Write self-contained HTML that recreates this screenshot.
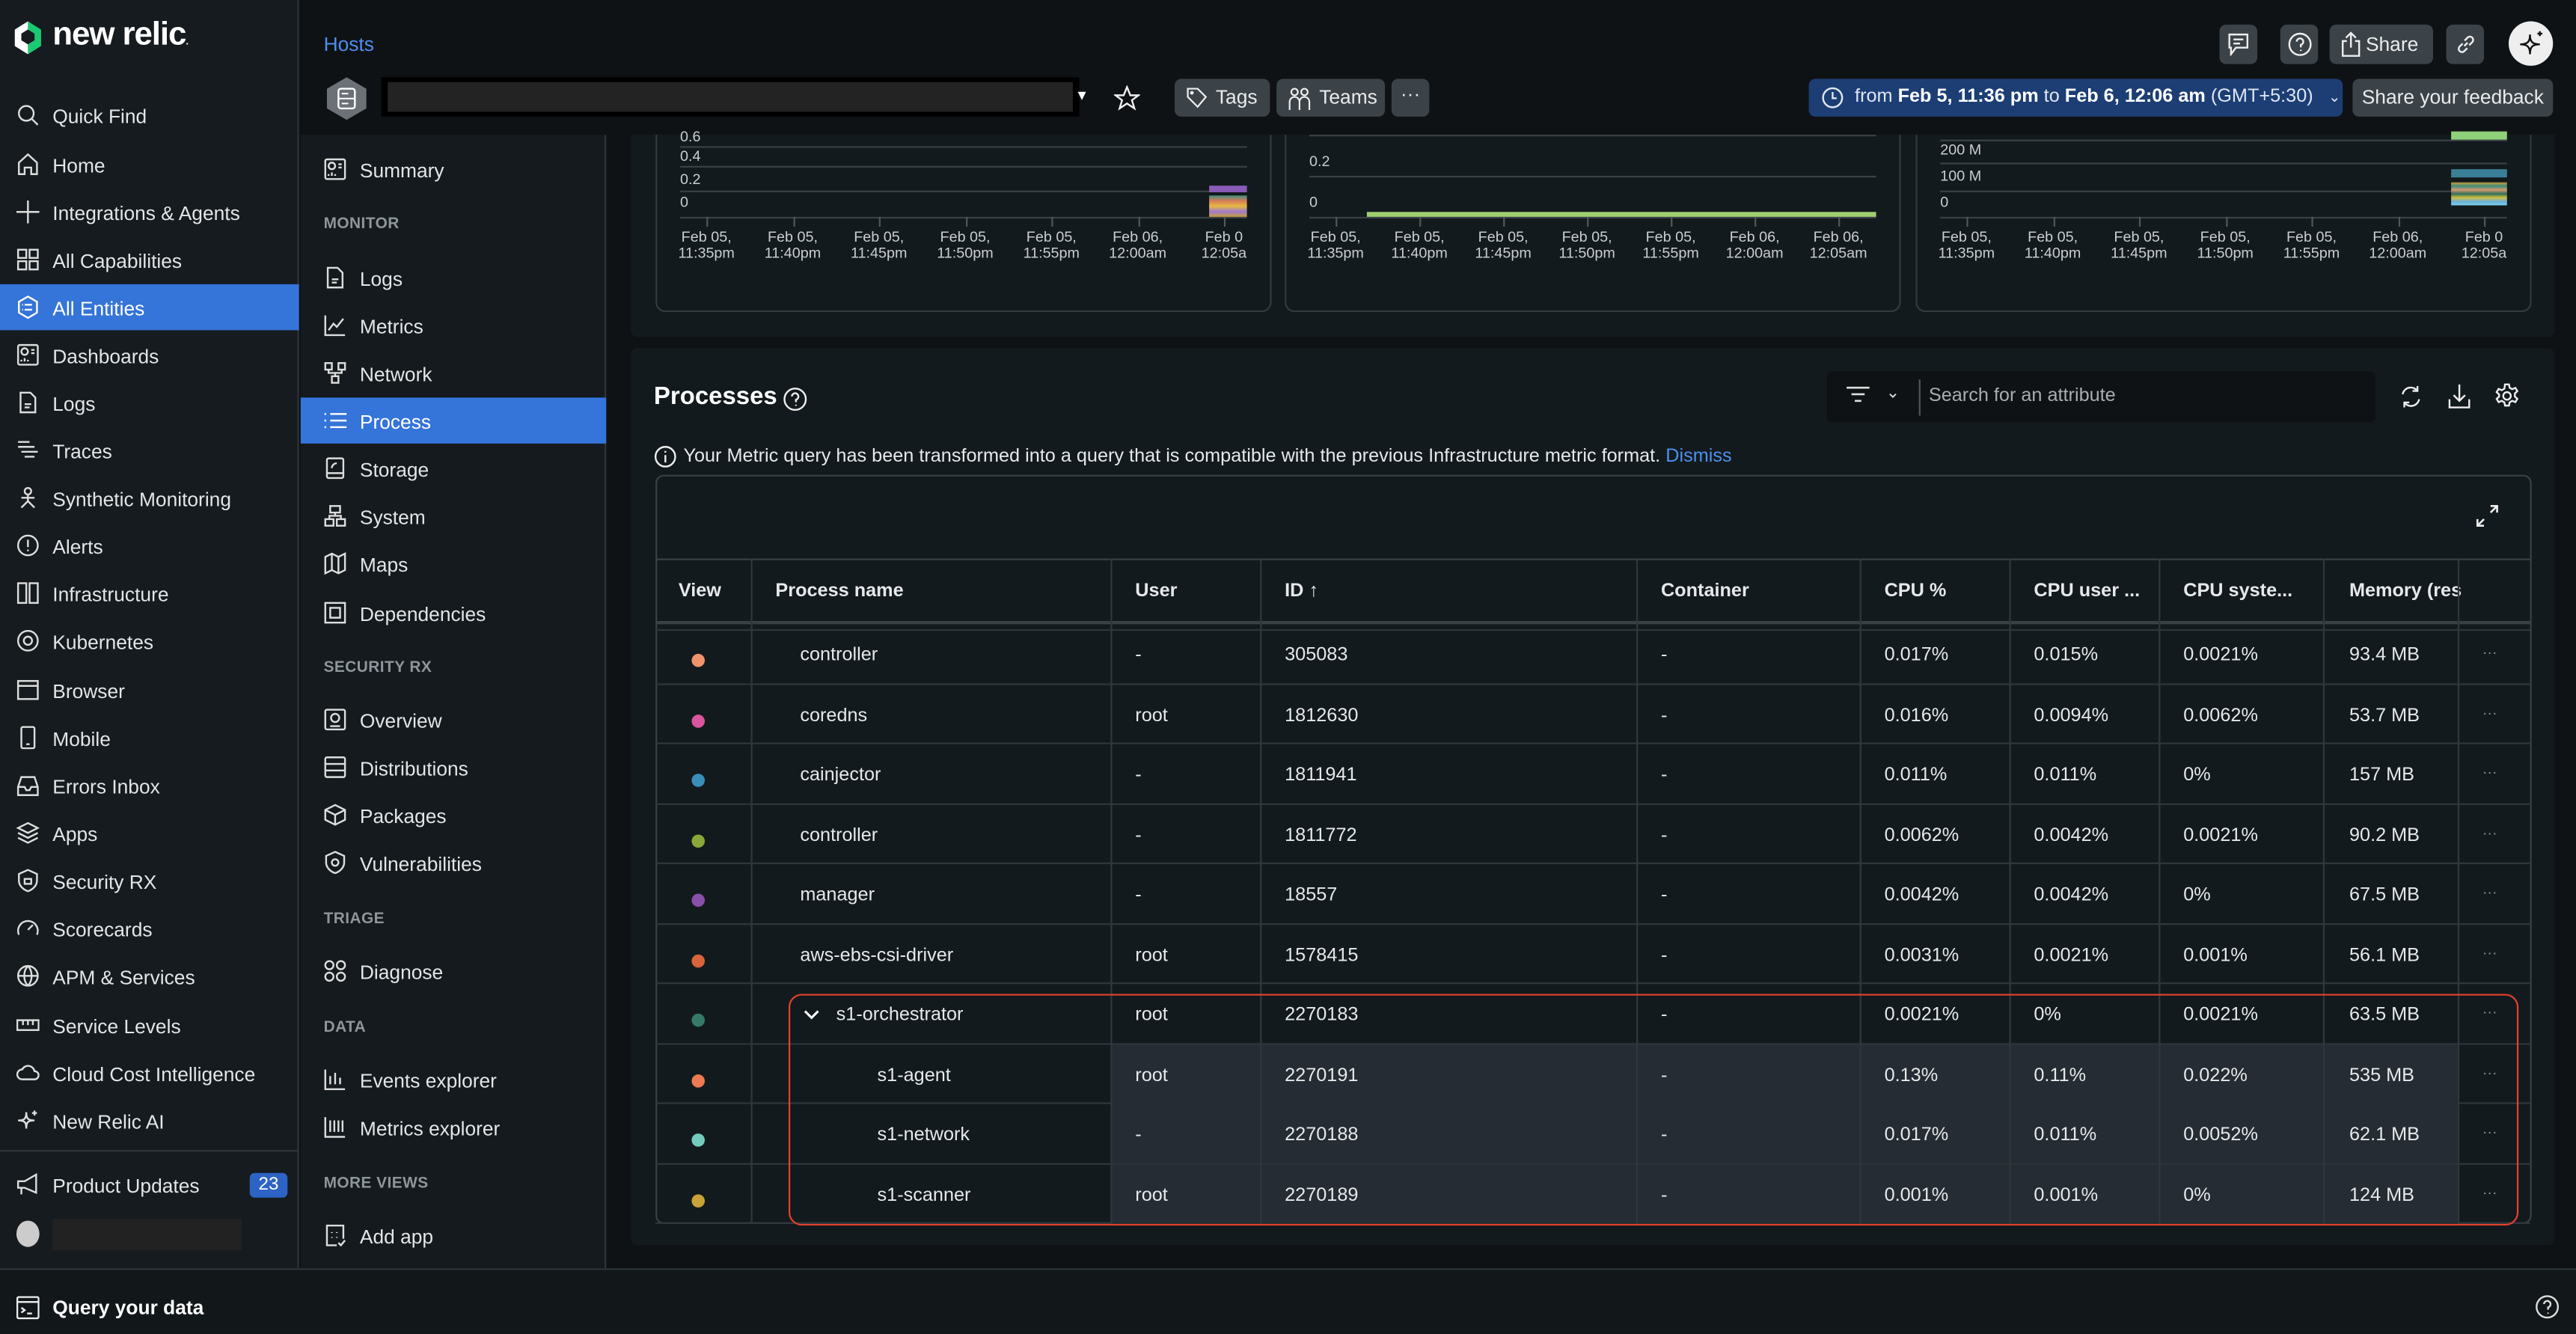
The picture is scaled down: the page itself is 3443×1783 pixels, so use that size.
<!DOCTYPE html>
<html><head><meta charset="utf-8"><style>
*{box-sizing:border-box;margin:0;padding:0}
html,body{width:3443px;height:1782px;overflow:hidden;background:#0f1214}
#s{position:absolute;left:0;top:0;width:1568px;height:812px;transform:scale(2.19579);transform-origin:0 0;font-family:"Liberation Sans",sans-serif;color:#e6e8ea;font-size:12px}
.a{position:absolute}
.nav{left:0;top:0;width:182px;height:772px;background:#151b1e;border-right:1px solid #2e353a}
.ni{position:absolute;left:0;width:182px;height:28px;line-height:30px;padding-left:32px;font-size:12px;color:#e3e5e7}
.ni svg{position:absolute;left:10px;top:7px}
.sn{left:183px;top:82px;width:186px;height:690px;background:#141a1d;border-right:1px solid #2e353a}
.si{position:absolute;left:0;width:186px;height:28px;line-height:30px;padding-left:36px;font-size:12px;color:#e3e5e7}
.si svg{position:absolute;left:14px;top:7px}
.sh{position:absolute;left:14px;font-size:9.5px;color:#8e959b;font-weight:bold;letter-spacing:.2px}
.btn{position:absolute;background:#3c4348;border-radius:4px;color:#e9ebec;font-size:12px}
.panel{background:#131a1d;border-radius:4px}
.chart{position:absolute;top:82px;height:108px;border:1px solid #343b40;border-top:none;border-radius:0 0 6px 6px}
.gl{position:absolute;height:1px;background:#3a4146}
.yl{position:absolute;font-size:9px;color:#c9cdd0}
.xl{position:absolute;font-size:9px;color:#c9cdd0;text-align:center;line-height:10px;width:40px}
.row{position:absolute;left:399px;width:1141px;height:36.5px;border-bottom:1px solid #30373c}
.c{position:absolute;top:1px;height:36px;line-height:36px;font-size:11.5px;color:#e6e8ea;white-space:nowrap}
.vl{position:absolute;width:1px;background:#30373c}
.dot{position:absolute;width:8px;height:8px;border-radius:50%;left:22px;top:18px}
.hl{position:absolute;left:277px;width:820px;top:0;height:36px;background:#252c33}
</style></head><body><div id="s">

<div class="a nav">
 <svg class="a" style="left:7px;top:12px" width="20" height="22" viewBox="0 0 20 22"><path d="M10 1 L18 6 V16 L10 21 V15 L14 12.5 V8.5 L10 6 Z" fill="#1ce783" opacity=".85"/><path d="M10 1 L2 6 V16 L10 21 V15 L6 12.5 V8.5 L10 6 Z" fill="#ffffff"/><path d="M10 6 L14 8.5 V12.5 L10 15 L6 12.5 V8.5Z" fill="#151b1e"/></svg>
 <div class="a" style="left:32px;top:10px;font-size:20px;font-weight:bold;color:#fff;letter-spacing:-.5px">new relic<span style="font-size:6px">.</span></div>
 <div class="ni" style="top:56px"><svg width="14" height="14" viewBox="0 0 14 14" fill="none" stroke="#ddd" stroke-width="1.1"><circle cx="6" cy="6" r="4.5"/><path d="M9.5 9.5L13 13"/></svg>Quick Find</div>
 <div class="ni" style="top:86px"><svg width="14" height="14" viewBox="0 0 14 14" fill="none" stroke="#ddd" stroke-width="1.1"><path d="M1.5 13V6L7 1l5.5 5v7h-3.5V9h-4v4z"/></svg>Home</div>
 <div class="ni" style="top:115px"><svg width="14" height="14" viewBox="0 0 14 14" fill="none" stroke="#ddd" stroke-width="1.1"><path d="M7 0v14M0 7h14"/></svg>Integrations &amp; Agents</div>
 <div class="ni" style="top:144px"><svg width="14" height="14" viewBox="0 0 14 14" fill="none" stroke="#ddd" stroke-width="1.1"><rect x="1" y="1" width="5" height="5"/><rect x="8" y="1" width="5" height="5"/><rect x="1" y="8" width="5" height="5"/><rect x="8" y="8" width="5" height="5"/></svg>All Capabilities</div>
 <div class="ni" style="top:173px;background:#3574d9;color:#fff"><svg width="14" height="14" viewBox="0 0 14 14" fill="none" stroke="#fff" stroke-width="1.1"><path d="M7 0.5l5.5 3.2v6.6L7 13.5l-5.5-3.2V3.7z"/><path d="M5 5.5h4.5M5 8.5h4.5M3.5 5.5h.5M3.5 8.5h.5"/></svg>All Entities</div>
 <div class="ni" style="top:202px"><svg width="14" height="14" viewBox="0 0 14 14" fill="none" stroke="#ddd" stroke-width="1.1"><rect x="1" y="1" width="12" height="12" rx="1"/><circle cx="5" cy="5" r="2"/><path d="M9 4h2M9 6h2M3 11v-1M5 11v-2M7 11v-1"/></svg>Dashboards</div>
 <div class="ni" style="top:231px"><svg width="14" height="14" viewBox="0 0 14 14" fill="none" stroke="#ddd" stroke-width="1.1"><path d="M2.5 1h6l3 3v9h-9z M5 8h4M5 10h3"/></svg>Logs</div>
 <div class="ni" style="top:260px"><svg width="14" height="14" viewBox="0 0 14 14" fill="none" stroke="#ddd" stroke-width="1.1"><path d="M1 2h7M1 5h10M3 8h10M5 11h6"/></svg>Traces</div>
 <div class="ni" style="top:289px"><svg width="14" height="14" viewBox="0 0 14 14" fill="none" stroke="#ddd" stroke-width="1.1"><circle cx="7" cy="3" r="2"/><path d="M7 5v4M3 13l4-4 4 4M3 7h8"/></svg>Synthetic Monitoring</div>
 <div class="ni" style="top:318px"><svg width="14" height="14" viewBox="0 0 14 14" fill="none" stroke="#ddd" stroke-width="1.1"><circle cx="7" cy="7" r="6"/><path d="M7 3.5v4.5M7 9.5v1"/></svg>Alerts</div>
 <div class="ni" style="top:347px"><svg width="14" height="14" viewBox="0 0 14 14" fill="none" stroke="#ddd" stroke-width="1.1"><rect x="1" y="1" width="5" height="12"/><rect x="8" y="1" width="5" height="12"/></svg>Infrastructure</div>
 <div class="ni" style="top:376px"><svg width="14" height="14" viewBox="0 0 14 14" fill="none" stroke="#ddd" stroke-width="1.1"><circle cx="7" cy="7" r="6"/><circle cx="7" cy="7" r="2.5"/></svg>Kubernetes</div>
 <div class="ni" style="top:406px"><svg width="14" height="14" viewBox="0 0 14 14" fill="none" stroke="#ddd" stroke-width="1.1"><rect x="1" y="1.5" width="12" height="11"/><path d="M1 4.5h12"/></svg>Browser</div>
 <div class="ni" style="top:435px"><svg width="14" height="14" viewBox="0 0 14 14" fill="none" stroke="#ddd" stroke-width="1.1"><rect x="3" y="0.5" width="8" height="13" rx="1"/><path d="M6 11h2"/></svg>Mobile</div>
 <div class="ni" style="top:464px"><svg width="14" height="14" viewBox="0 0 14 14" fill="none" stroke="#ddd" stroke-width="1.1"><path d="M1 8l2-6h8l2 6v5H1z M1 8h4l1 2h2l1-2h4"/></svg>Errors Inbox</div>
 <div class="ni" style="top:493px"><svg width="14" height="14" viewBox="0 0 14 14" fill="none" stroke="#ddd" stroke-width="1.1"><path d="M7 1l6 3-6 3-6-3z M1 7l6 3 6-3M1 10l6 3 6-3"/></svg>Apps</div>
 <div class="ni" style="top:522px"><svg width="14" height="14" viewBox="0 0 14 14" fill="none" stroke="#ddd" stroke-width="1.1"><path d="M7 .5l5.5 2.5v4c0 3-2.5 5.5-5.5 6.5C4 12.5 1.5 10 1.5 7V3z"/><rect x="5" y="6" width="4" height="3"/></svg>Security RX</div>
 <div class="ni" style="top:551px"><svg width="14" height="14" viewBox="0 0 14 14" fill="none" stroke="#ddd" stroke-width="1.1"><path d="M1.5 11a6 6 0 1 1 11 0"/><path d="M7 8l3-3"/></svg>Scorecards</div>
 <div class="ni" style="top:580px"><svg width="14" height="14" viewBox="0 0 14 14" fill="none" stroke="#ddd" stroke-width="1.1"><circle cx="7" cy="7" r="6"/><path d="M1 7h12M7 1c3 3 3 9 0 12M7 1c-3 3-3 9 0 12"/></svg>APM &amp; Services</div>
 <div class="ni" style="top:610px"><svg width="14" height="14" viewBox="0 0 14 14" fill="none" stroke="#ddd" stroke-width="1.1"><rect x="0.5" y="4" width="13" height="6"/><path d="M4 4v3M7 4v3M10 4v3"/></svg>Service Levels</div>
 <div class="ni" style="top:639px"><svg width="14" height="14" viewBox="0 0 14 14" fill="none" stroke="#ddd" stroke-width="1.1"><path d="M3.5 11a3 3 0 0 1 0-6 4 4 0 0 1 7.5 1 2.5 2.5 0 0 1 0 5z"/></svg>Cloud Cost Intelligence</div>
 <div class="ni" style="top:668px"><svg width="14" height="14" viewBox="0 0 14 14" fill="none" stroke="#ddd" stroke-width="1.1"><path d="M6 2c0 4 1 5 5 5-4 0-5 1-5 5 0-4-1-5-5-5 4 0 5-1 5-5z M11 1v3M9.5 2.5h3"/></svg>New Relic AI</div>
 <div class="a" style="left:0;top:700px;width:182px;height:1px;background:#2e353a"></div>
 <div class="ni" style="top:707px"><svg width="14" height="14" viewBox="0 0 14 14" fill="none" stroke="#ddd" stroke-width="1.1"><path d="M1 5h4l7-4v11L5 9H1z M3 9v4"/></svg>Product Updates</div>
 <div class="a" style="left:152px;top:714px;width:23px;height:15px;border-radius:3px;background:#2d63c4;color:#fff;font-size:11px;text-align:center;line-height:15px">23</div>
 <div class="a" style="left:10px;top:743px;width:14px;height:16px;border-radius:50%;background:#ccc"></div>
 <div class="a" style="left:32px;top:742px;width:115px;height:19px;background:#222"></div>
</div>

<div class="a" style="left:0;top:772px;width:1568px;height:40px;background:#121719;border-top:1px solid #2e353a"></div>
<svg class="a" style="left:10px;top:789px" width="14" height="14" viewBox="0 0 14 14" fill="none" stroke="#eee" stroke-width="1.1"><rect x="0.5" y="0.5" width="13" height="13" rx="1"/><path d="M0.5 3.5h13M3 7l2 1.5L3 10M6.5 10.5h3"/></svg>
<div class="a" style="left:32px;top:789px;font-size:12px;font-weight:bold;color:#fff">Query your data</div>
<svg class="a" style="left:1543px;top:788px" width="15" height="15" viewBox="0 0 15 15" fill="none" stroke="#ddd" stroke-width="1.1"><circle cx="7.5" cy="7.5" r="6.5"/><path d="M5.5 5.8a2 2 0 1 1 2.5 2v1.4M8 11v.6"/></svg>

<div class="a" style="left:183px;top:0;width:1385px;height:82px;background:#0f1214"></div>
<div class="a" style="left:197px;top:20px;color:#4d8ff0;font-size:12px">Hosts</div>
<svg class="a" style="left:197px;top:46px" width="28" height="28" viewBox="0 0 28 28"><path d="M14 1L26 8V20L14 27L2 20V8Z" fill="#6b7177"/><rect x="9" y="8" width="10" height="12" rx="1.5" fill="none" stroke="#fff" stroke-width="1.1"/><path d="M9 14h10M11 11h4M11 17h4" stroke="#fff" stroke-width=".9"/></svg>
<div class="a" style="left:232px;top:47px;width:425px;height:24px;background:#000"></div>
<div class="a" style="left:236px;top:50px;width:417px;height:18px;background:#232323"></div>
<div class="a" style="left:656px;top:53px;font-size:10px;color:#fff">&#9662;</div>
<svg class="a" style="left:678px;top:52px" width="16" height="16" viewBox="0 0 16 16" fill="none" stroke="#eee" stroke-width="1.1"><path d="M8 1l2 5h5l-4 3 1.5 5L8 11l-4.5 3L5 9 1 6h5z"/></svg>
<div class="btn" style="left:715px;top:48px;width:58px;height:23px;line-height:23px;padding-left:25px">Tags<svg class="a" style="left:7px;top:5px" width="13" height="13" viewBox="0 0 13 13" fill="none" stroke="#eee" stroke-width="1"><path d="M1 1h6l5 5-5 6-6-6z"/><circle cx="3.5" cy="3.5" r=".6"/></svg></div>
<div class="btn" style="left:777px;top:48px;width:66px;height:23px;line-height:23px;padding-left:26px">Teams<svg class="a" style="left:7px;top:5px" width="14" height="14" viewBox="0 0 14 14" fill="none" stroke="#eee" stroke-width="1"><circle cx="4" cy="3" r="2"/><circle cx="10" cy="3" r="2"/><path d="M1 14V9a3 3 0 0 1 6 0v5M7 9a3 3 0 0 1 6 0v5"/></svg></div>
<div class="btn" style="left:847px;top:48px;width:23px;height:23px;line-height:19px;text-align:center">···</div>
<div class="btn" style="left:1351px;top:15px;width:23px;height:24px"><svg class="a" style="left:5px;top:5px" width="13" height="14" viewBox="0 0 13 14" fill="none" stroke="#eee" stroke-width="1.1"><path d="M1 1h11v8H5l-3 4V9H1z M3.5 4h6M3.5 6.5h4"/></svg></div>
<div class="btn" style="left:1388px;top:15px;width:23px;height:24px"><svg class="a" style="left:4px;top:4px" width="16" height="16" viewBox="0 0 16 16" fill="none" stroke="#eee" stroke-width="1.1"><circle cx="8" cy="8" r="6.5"/><path d="M6 6.3a2 2 0 1 1 2.5 2v1.5M8.5 11.3v.7"/></svg></div>
<div class="btn" style="left:1418px;top:15px;width:63px;height:24px;line-height:24px;padding-left:22px;font-size:12px">Share<svg class="a" style="left:7px;top:4px" width="12" height="16" viewBox="0 0 12 16" fill="none" stroke="#eee" stroke-width="1.1"><path d="M6 10V1M3 4l3-3 3 3M3.5 6H1v9h10V6H8.5"/></svg></div>
<div class="btn" style="left:1489px;top:15px;width:23px;height:24px"><svg class="a" style="left:5px;top:5px" width="14" height="14" viewBox="0 0 14 14" fill="none" stroke="#eee" stroke-width="1.1"><path d="M6 8l2-2M5 6.5L3 8.5a2 2 0 0 0 2.8 2.8l2-2M9 7.5l2-2A2 2 0 0 0 8.2 2.7l-2 2"/></svg></div>
<div class="a" style="left:1527px;top:13px;width:27px;height:27px;border-radius:50%;background:#eee"><svg class="a" style="left:6px;top:5px" width="16" height="17" viewBox="0 0 16 17" fill="none" stroke="#111" stroke-width="1.1"><path d="M7 3c0 4.5 1.5 6 6 6-4.5 0-6 1.5-6 6 0-4.5-1.5-6-6-6 4.5 0 6-1.5 6-6z M13 1v3M11.5 2.5h3"/></svg></div>
<div class="a" style="left:1101px;top:48px;width:325px;height:23px;background:#1c3e74;border-radius:4px;color:#dfe6f2;font-size:11.5px;line-height:23px;padding-left:28px;white-space:nowrap">from <b style="color:#fff">Feb 5, 11:36 pm</b> to <b style="color:#fff">Feb 6, 12:06 am</b> (GMT+5:30) <span style="margin-left:6px;font-size:9px">&#8964;</span><svg class="a" style="left:8px;top:5px" width="13" height="13" viewBox="0 0 13 13" fill="none" stroke="#dfe6f2" stroke-width="1.1"><circle cx="6.5" cy="6.5" r="5.8"/><path d="M6.5 3v3.8h2.5"/></svg></div>
<div class="btn" style="left:1432px;top:48px;width:122px;height:23px;line-height:23px;text-align:center;font-size:12px">Share your feedback</div>

<div class="a sn">
 <div class="si" style="top:7px"><svg width="14" height="14" viewBox="0 0 14 14" fill="none" stroke="#ddd" stroke-width="1.1"><rect x="1" y="1" width="12" height="12" rx="1"/><circle cx="5" cy="5" r="2"/><path d="M9 4h2M9 6h2M3 11v-1M5 11v-2M7 11v-1"/></svg>Summary</div>
 <div class="sh" style="top:49px">MONITOR</div>
 <div class="si" style="top:73px"><svg width="14" height="14" viewBox="0 0 14 14" fill="none" stroke="#ddd" stroke-width="1.1"><path d="M2.5 1h6l3 3v9h-9z M5 8h4M5 10h3"/></svg>Logs</div>
 <div class="si" style="top:102px"><svg width="14" height="14" viewBox="0 0 14 14" fill="none" stroke="#ddd" stroke-width="1.1"><path d="M1 1v12h12M3 10l3-4 2 2 4-5"/></svg>Metrics</div>
 <div class="si" style="top:131px"><svg width="14" height="14" viewBox="0 0 14 14" fill="none" stroke="#ddd" stroke-width="1.1"><rect x="1" y="1" width="4" height="4"/><rect x="9" y="1" width="4" height="4"/><rect x="5" y="9" width="4" height="4"/><path d="M3 5v2h8V5M7 7v2"/></svg>Network</div>
 <div class="si" style="top:160px;background:#3574d9;color:#fff"><svg width="14" height="14" viewBox="0 0 14 14" fill="none" stroke="#fff" stroke-width="1.1"><path d="M4 3h10M4 7h10M4 11h10M0.5 3h1M0.5 7h1M0.5 11h1"/></svg>Process</div>
 <div class="si" style="top:189px"><svg width="14" height="14" viewBox="0 0 14 14" fill="none" stroke="#ddd" stroke-width="1.1"><rect x="2" y="1" width="10" height="12" rx="1"/><path d="M2 10h10M5 7a3 3 0 0 1 3-3"/></svg>Storage</div>
 <div class="si" style="top:218px"><svg width="14" height="14" viewBox="0 0 14 14" fill="none" stroke="#ddd" stroke-width="1.1"><rect x="4" y="1" width="6" height="4"/><rect x="1" y="9" width="5" height="4"/><rect x="8" y="9" width="5" height="4"/><path d="M7 5v2H3.5v2M7 7h3.5v2"/></svg>System</div>
 <div class="si" style="top:247px"><svg width="14" height="14" viewBox="0 0 14 14" fill="none" stroke="#ddd" stroke-width="1.1"><path d="M1 3l4-2 4 2 4-2v10l-4 2-4-2-4 2z M5 1v10M9 3v10"/></svg>Maps</div>
 <div class="si" style="top:277px"><svg width="14" height="14" viewBox="0 0 14 14" fill="none" stroke="#ddd" stroke-width="1.1"><rect x="1" y="1" width="12" height="12"/><path d="M4 4h6v6H4z"/></svg>Dependencies</div>
 <div class="sh" style="top:319px">SECURITY RX</div>
 <div class="si" style="top:342px"><svg width="14" height="14" viewBox="0 0 14 14" fill="none" stroke="#ddd" stroke-width="1.1"><rect x="1" y="1" width="12" height="12" rx="1"/><circle cx="7" cy="6" r="2.5"/><path d="M4 11h6"/></svg>Overview</div>
 <div class="si" style="top:371px"><svg width="14" height="14" viewBox="0 0 14 14" fill="none" stroke="#ddd" stroke-width="1.1"><rect x="1" y="1" width="12" height="12" rx="1"/><path d="M1 5h12M1 9h12"/></svg>Distributions</div>
 <div class="si" style="top:400px"><svg width="14" height="14" viewBox="0 0 14 14" fill="none" stroke="#ddd" stroke-width="1.1"><path d="M7 1l6 3v6l-6 3-6-3V4z M1 4l6 3 6-3M7 7v6"/></svg>Packages</div>
 <div class="si" style="top:429px"><svg width="14" height="14" viewBox="0 0 14 14" fill="none" stroke="#ddd" stroke-width="1.1"><path d="M7 .5l5.5 2.5v4c0 3-2.5 5.5-5.5 6.5C4 12.5 1.5 10 1.5 7V3z"/><circle cx="7" cy="7" r="2"/></svg>Vulnerabilities</div>
 <div class="sh" style="top:472px">TRIAGE</div>
 <div class="si" style="top:495px"><svg width="14" height="14" viewBox="0 0 14 14" fill="none" stroke="#ddd" stroke-width="1.1"><circle cx="3.5" cy="3.5" r="2.5"/><circle cx="10.5" cy="3.5" r="2.5"/><circle cx="3.5" cy="10.5" r="2.5"/><circle cx="10.5" cy="10.5" r="2.5"/></svg>Diagnose</div>
 <div class="sh" style="top:538px">DATA</div>
 <div class="si" style="top:561px"><svg width="14" height="14" viewBox="0 0 14 14" fill="none" stroke="#ddd" stroke-width="1.1"><path d="M1 1v12h12M4 10V5M7 10V3M10 10V6"/></svg>Events explorer</div>
 <div class="si" style="top:590px"><svg width="14" height="14" viewBox="0 0 14 14" fill="none" stroke="#ddd" stroke-width="1.1"><path d="M1 1v12h12M4 10V3M6.5 10V3M9 10V3M11.5 10V3"/></svg>Metrics explorer</div>
 <div class="sh" style="top:633px">MORE VIEWS</div>
 <div class="si" style="top:656px"><svg width="14" height="14" viewBox="0 0 14 14" fill="none" stroke="#ddd" stroke-width="1.1"><path d="M8 13H2V1h10v8M5 5v.5M8 5v.5M5 8v.5M8 8v.5M9 11.5l1.5 1.5 2.5-3"/></svg>Add app</div>
</div>

<div class="a panel" style="left:384px;top:82px;width:1171px;height:123px;border-radius:0 0 4px 4px"></div>
<div class="chart" style="left:399px;width:375px"></div>
<div class="chart" style="left:782px;width:375px"></div>
<div class="chart" style="left:1166px;width:375px"></div>
<div class="yl" style="left:414px;top:78px">0.6</div>
<div class="gl" style="left:414px;top:89px;width:345px"></div>
<div class="yl" style="left:414px;top:90px">0.4</div>
<div class="gl" style="left:414px;top:101px;width:345px"></div>
<div class="yl" style="left:414px;top:104px">0.2</div>
<div class="gl" style="left:414px;top:116px;width:345px"></div>
<div class="yl" style="left:414px;top:118px">0</div>
<div class="gl" style="left:414px;top:132px;width:345px"></div>
<div class="a" style="left:736px;top:113px;width:23px;height:4px;background:#8a5cb8"></div>
<div class="a" style="left:736px;top:119px;width:23px;height:13px;background:linear-gradient(#3f8f7a,#d77a5a,#e6b940,#a07ad0,#c7a038)"></div>
<div class="gl" style="left:797px;top:82px;width:345px"></div>
<div class="yl" style="left:797px;top:93px">0.2</div>
<div class="gl" style="left:797px;top:107px;width:345px"></div>
<div class="yl" style="left:797px;top:118px">0</div>
<div class="gl" style="left:797px;top:132px;width:345px"></div>
<div class="a" style="left:832px;top:129px;width:310px;height:3px;background:#9fcf6f"></div>
<div class="gl" style="left:1181px;top:85px;width:345px"></div>
<div class="a" style="left:1492px;top:80px;width:34px;height:5px;background:#8fd07a"></div>
<div class="yl" style="left:1181px;top:86px">200 M</div>
<div class="gl" style="left:1181px;top:99px;width:345px"></div>
<div class="yl" style="left:1181px;top:102px">100 M</div>
<div class="gl" style="left:1181px;top:116px;width:345px"></div>
<div class="a" style="left:1492px;top:103px;width:34px;height:5px;background:#3a7f98"></div>
<div class="a" style="left:1492px;top:111px;width:34px;height:14px;background:linear-gradient(#c49a38,#3f8f7a,#d79a70,#2f6f5a,#d0c040,#6ab0d8,#7ad0e8)"></div>
<div class="yl" style="left:1181px;top:118px">0</div>
<div class="gl" style="left:1181px;top:132px;width:345px"></div>
<div id="xl"></div>

<div class="a panel" style="left:384px;top:212px;width:1171px;height:546px"></div>
<div class="a" style="left:398px;top:233px;font-size:15px;font-weight:bold;color:#fff">Processes</div>
<svg class="a" style="left:476px;top:235px" width="16" height="16" viewBox="0 0 16 16" fill="none" stroke="#eee" stroke-width="1.1"><circle cx="8" cy="8" r="6.5"/><path d="M6 6.3a2 2 0 1 1 2.5 2v1.5M8.5 11.3v.7"/></svg>
<div class="a" style="left:1112px;top:226px;width:334px;height:31px;background:#0f1214;border-radius:3px"></div>
<svg class="a" style="left:1124px;top:235px" width="14" height="12" viewBox="0 0 14 12" fill="none" stroke="#ddd" stroke-width="1.2"><path d="M0 1h14M3 5h8M5 9h4"/></svg>
<div class="a" style="left:1148px;top:234px;font-size:10px;color:#ddd">&#8964;</div>
<div class="a" style="left:1168px;top:231px;width:1px;height:22px;background:#555"></div>
<div class="a" style="left:1174px;top:235px;font-size:11.5px;color:#a8adb1">Search for an attribute</div>
<svg class="a" style="left:1460px;top:234px" width="15" height="15" viewBox="0 0 15 15" fill="none" stroke="#eee" stroke-width="1.1"><path d="M2.5 6a5 5 0 0 1 9-2M12.5 9a5 5 0 0 1-9 2M11.5 1v3h-3M3.5 14v-3h3"/></svg>
<svg class="a" style="left:1490px;top:233px" width="14" height="16" viewBox="0 0 14 16" fill="none" stroke="#eee" stroke-width="1.1"><path d="M7 1v10M3.5 7.5L7 11l3.5-3.5M1 10v5h12v-5"/></svg>
<svg class="a" style="left:1518px;top:233px" width="16" height="16" viewBox="0 0 16 16" fill="none" stroke="#eee" stroke-width="1.1"><circle cx="8" cy="8" r="2.3"/><path d="M6.8 1h2.4l.4 2 1.6.9 1.9-.8 1.2 2-1.5 1.4v1.9l1.5 1.4-1.2 2-1.9-.8-1.6.9-.4 2H6.8l-.4-2-1.6-.9-1.9.8-1.2-2 1.5-1.4V7.1L1.7 5.7l1.2-2 1.9.8 1.6-.9z"/></svg>
<svg class="a" style="left:398px;top:271px" width="14" height="14" viewBox="0 0 14 14" fill="none" stroke="#eee" stroke-width="1.1"><circle cx="7" cy="7" r="6"/><path d="M7 6v4.5M7 3.5v1"/></svg>
<div class="a" style="left:416px;top:272px;font-size:11.5px;color:#e6e8ea">Your Metric query has been transformed into a query that is compatible with the previous Infrastructure metric format. <span style="color:#4d8ff0">Dismiss</span></div>

<div class="a" style="left:399px;top:289px;width:1142px;height:456px;border:1px solid #3a4146;border-radius:5px"></div>
<svg class="a" style="left:1507px;top:307px" width="14" height="14" viewBox="0 0 14 14" fill="none" stroke="#eee" stroke-width="1.2"><path d="M9 1h4v4M13 1L9 5M5 13H1V9M1 13l4-4"/></svg>
<div class="a" style="left:399px;top:340px;width:1141px;height:1px;background:#3a4146"></div>
<div class="a" style="left:399px;top:378px;width:1141px;height:1.5px;background:#3a4146"></div>
<div class="a" style="left:399px;top:383px;width:1141px;height:1px;background:#30373c"></div>
<div id="tb"></div>
<div class="a" style="left:480px;top:605px;width:1053px;height:141px;border:1.5px solid #e5412e;border-radius:8px;z-index:5"></div>

<script>
var xl=document.getElementById('xl'),h='';
var labs=[['Feb 05,','11:35pm'],['Feb 05,','11:40pm'],['Feb 05,','11:45pm'],['Feb 05,','11:50pm'],['Feb 05,','11:55pm'],['Feb 06,','12:00am'],['Feb 0','12:05a']];
[[430,52.5],[813,51],[1197,52.5]].forEach(function(c,ci){for(var i=0;i<7;i++){var x=c[0]+i*c[1];var l=labs[i];if(ci==1&&i==6)l=['Feb 06,','12:05am'];h+='<div class="a" style="left:'+x+'px;top:132px;width:1px;height:6px;background:#555"></div><div class="xl" style="left:'+(x-20)+'px;top:139px">'+l[0]+'<br>'+l[1]+'</div>';}});
xl.innerHTML=h;
var cols=[457,676,767,996,1132,1223,1314,1414,1496];
var t='<div class="a" style="left:0;top:340px;width:1568px;height:38px">';
var hd=[[413,'View'],[472,'Process name'],[691,'User'],[782,'ID ↑'],[1011,'Container'],[1147,'CPU %'],[1238,'CPU user ...'],[1329,'CPU syste...'],[1430,'Memory (res']];
hd.forEach(function(d){t+='<div class="c" style="left:'+d[0]+'px;height:38px;line-height:38px;font-weight:bold;font-size:11.5px">'+d[1]+'</div>';});
t+='</div>';
cols.forEach(function(x){t+='<div class="vl" style="left:'+x+'px;top:340px;height:404px"></div>';});
var rows=[['#ee946c','controller',0,'-','305083','0.017%','0.015%','0.0021%','93.4 MB'],['#d9559e','coredns',0,'root','1812630','0.016%','0.0094%','0.0062%','53.7 MB'],['#3a8fb8','cainjector',0,'-','1811941','0.011%','0.011%','0%','157 MB'],['#8aa83a','controller',0,'-','1811772','0.0062%','0.0042%','0.0021%','90.2 MB'],['#8a4fa8','manager',0,'-','18557','0.0042%','0.0042%','0%','67.5 MB'],['#d9643c','aws-ebs-csi-driver',0,'root','1578415','0.0031%','0.0021%','0.001%','56.1 MB'],['#357a68','s1-orchestrator',1,'root','2270183','0.0021%','0%','0.0021%','63.5 MB'],['#ee7a52','s1-agent',2,'root','2270191','0.13%','0.11%','0.022%','535 MB'],['#74cbbd','s1-network',2,'-','2270188','0.017%','0.011%','0.0052%','62.1 MB'],['#c9a23a','s1-scanner',2,'root','2270189','0.001%','0.001%','0%','124 MB']];
rows.forEach(function(r,i){var y=380+i*36.5;t+='<div class="row" style="top:'+y+'px">';
if(r[2]==2)t+='<div class="hl"></div>';
t+='<div class="dot" style="background:'+r[0]+'"></div>';
var nx=r[2]==2?135:(r[2]==1?110:88);
if(r[2]==1)t+='<svg class="a" style="left:90px;top:15px" width="10" height="8" viewBox="0 0 10 8" fill="none" stroke="#fff" stroke-width="1.4"><path d="M1 1.5l4 4 4-4"/></svg>';
t+='<div class="c" style="left:'+nx+'px">'+r[1]+'</div>';
var xs=[292,383,612,748,839,930,1031];var v=[r[3],r[4],'-',r[5],r[6],r[7],r[8]];
for(var k=0;k<7;k++)t+='<div class="c" style="left:'+xs[k]+'px">'+v[k]+'</div>';
t+='<div class="c" style="left:1112px;color:#8a9094;font-size:9px;line-height:32px">···</div></div>';});
cols.forEach(function(x){t+='<div class="vl" style="left:'+x+'px;top:380px;height:365px;z-index:2"></div>';});
document.getElementById('tb').innerHTML=t;
</script>
</div></body></html>
